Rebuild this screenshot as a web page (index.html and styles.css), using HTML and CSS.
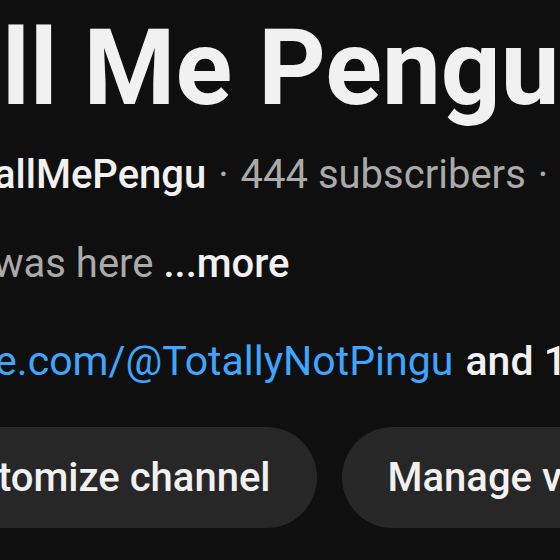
FILE: index.html
```html
<!DOCTYPE html>
<html lang="en">
<head>
  <meta charset="UTF-8" />
  <meta name="viewport" content="width=device-width, initial-scale=1" />
  <title>Call Me Pengu</title>
  <link rel="stylesheet" href="styles.css">
</head>
<body>
  <div class="channel-header">
    <h1 class="channel-name">Call Me Pengu</h1>

    <div class="channel-meta">
      <span class="handle">@CallMePengu</span>
      <span class="sep">·</span>
      <span>444 subscribers</span>
      <span class="sep">·</span>
      <span>12 videos</span>
    </div>

    <div class="channel-desc">
      Pingu was here <span class="more">...more</span>
    </div>

    <div class="channel-links">
      <a href="#">youtube.com/@TotallyNotPingu</a>
      <span class="more-links">and 1 more link</span>
    </div>

    <div class="actions">
      <button class="pill-btn customize">Customize channel</button>
      <button class="pill-btn">Manage videos</button>
    </div>
  </div>
</body>
</html>
```

FILE: styles.css
```css
body {
  margin: 0;
  padding: 0;
  background-color: #0f0f0f;
  color: #f1f1f1;
  font-family: 'Roboto', 'Noto Sans', sans-serif;
  overflow: hidden;
  width: 560px;
  height: 560px;
}

.channel-header {
  display: flex;
  flex-direction: column;
  align-items: flex-start;
  padding-top: 9px;
}

.channel-name {
  margin: 0 0 0 -123px;
  font-size: 105px;
  line-height: 120px;
  font-weight: 700;
  white-space: nowrap;
  color: #f1f1f1;
}

.channel-meta {
  margin: 22px 0 0 -68px;
  font-size: 40px;
  line-height: 48px;
  color: #aaaaaa;
  white-space: nowrap;
}

.channel-meta .handle {
  color: #f1f1f1;
  font-weight: 500;
}

.channel-meta .sep {
  margin: 0 2px;
}

.channel-desc {
  margin: 41px 0 0 -118px;
  font-size: 40px;
  line-height: 48px;
  color: #aaaaaa;
  white-space: nowrap;
}

.channel-desc .more {
  color: #f1f1f1;
  font-weight: 500;
}

.channel-links {
  margin: 49px 0 0 -129px;
  font-size: 41px;
  line-height: 48px;
  white-space: nowrap;
}

.channel-links a {
  color: #3ea6ff;
  text-decoration: none;
}

.more-links {
  color: #f1f1f1;
  font-weight: 500;
  margin-left: 2px;
}

.actions {
  display: flex;
  gap: 25px;
  margin: 42px 0 0 -117px;
}

.pill-btn {
  height: 101px;
  padding: 0 46px;
  border: none;
  border-radius: 51px;
  background-color: #272727;
  color: #f1f1f1;
  font-family: 'Roboto', 'Noto Sans', sans-serif;
  font-size: 40px;
  font-weight: 500;
  white-space: nowrap;
  cursor: pointer;
}
```
